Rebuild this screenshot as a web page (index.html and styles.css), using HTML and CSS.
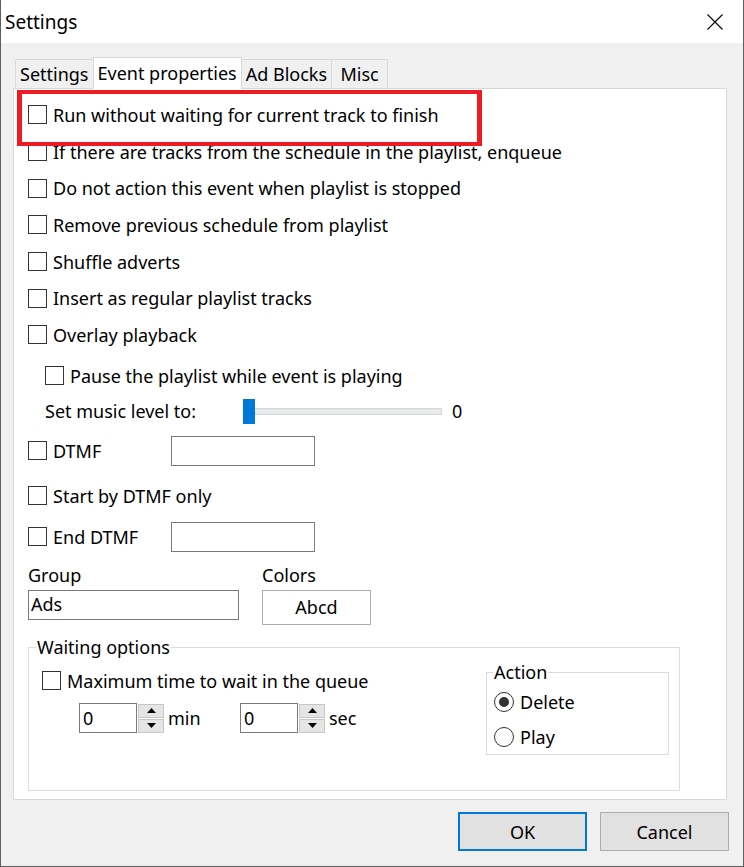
FILE: index.html
```html
<!DOCTYPE html>
<html lang="en">
<head>
    <meta charset="UTF-8">
    <meta name="viewport" content="width=device-width, initial-scale=1.0">
    <title>Settings</title>
    <link rel="stylesheet" href="styles.css">
</head>
<body>
<div class="window">
    <div class="titlebar">
        <span class="title">Settings</span>
        <span class="close">
            <svg width="16" height="16" viewBox="0 0 16 16"><path d="M0.5 0.5L15.5 15.5M15.5 0.5L0.5 15.5" stroke="#000" stroke-width="1.1" fill="none"/></svg>
        </span>
    </div>

    <div class="client">
        <div class="tabs">
            <div class="tab">Settings</div>
            <div class="tab active">Event properties</div>
            <div class="tab">Ad Blocks</div>
            <div class="tab">Misc</div>
        </div>

        <div class="panel">
            <!-- event options -->
            <div class="row marked"><span class="box"></span>Run without waiting for current track to finish</div>
            <div class="row"><span class="box"></span>If there are tracks from the schedule in the playlist, enqueue</div>
            <div class="row"><span class="box"></span>Do not action this event when playlist is stopped</div>
            <div class="row"><span class="box"></span>Remove previous schedule from playlist</div>
            <div class="row"><span class="box"></span>Shuffle adverts</div>
            <div class="row"><span class="box"></span>Insert as regular playlist tracks</div>
            <div class="row"><span class="box"></span>Overlay playback</div>

            <div class="row indent pause"><span class="box"></span>Pause the playlist while event is playing</div>
            <div class="row indent music">
                <span class="music-label">Set music level to:</span>
                <span class="slider"><span class="thumb"></span></span>
                <span class="level">0</span>
            </div>

            <!-- DTMF -->
            <div class="row field dtmf">
                <span class="check-wide"><span class="box"></span>DTMF</span>
                <span class="text"></span>
            </div>
            <div class="row field start"><span class="box"></span>Start by DTMF only</div>
            <div class="row field end">
                <span class="check-wide"><span class="box"></span>End DTMF</span>
                <span class="text"></span>
            </div>

            <div class="fields">
                <div class="group-col">
                    <div class="label">Group</div>
                    <div class="text wide">Ads</div>
                </div>
                <div class="colors-col">
                    <div class="label">Colors</div>
                    <div class="color-btn">Abcd</div>
                </div>
            </div>

            <!-- waiting options -->
            <fieldset class="waiting">
                <legend>Waiting options</legend>
                <div class="wait-body">
                    <div class="wait-left">
                        <div class="row max"><span class="box"></span>Maximum time to wait in the queue</div>
                        <div class="spins">
                            <div class="spin">
                                <span class="num">0</span>
                                <span class="arrows">
                                    <span><svg width="9" height="5" viewBox="0 0 9 5"><path d="M0 5L4.5 0L9 5Z" fill="#000"/></svg></span>
                                    <span><svg width="9" height="5" viewBox="0 0 9 5"><path d="M0 0L4.5 5L9 0Z" fill="#000"/></svg></span>
                                </span>
                                <span class="unit">min</span>
                            </div>
                            <div class="spin">
                                <span class="num">0</span>
                                <span class="arrows">
                                    <span><svg width="9" height="5" viewBox="0 0 9 5"><path d="M0 5L4.5 0L9 5Z" fill="#000"/></svg></span>
                                    <span><svg width="9" height="5" viewBox="0 0 9 5"><path d="M0 0L4.5 5L9 0Z" fill="#000"/></svg></span>
                                </span>
                                <span class="unit">sec</span>
                            </div>
                        </div>
                    </div>
                    <fieldset class="action">
                        <legend>Action</legend>
                        <div class="radio-row first"><span class="radio on"></span>Delete</div>
                        <div class="radio-row"><span class="radio"></span>Play</div>
                    </fieldset>
                </div>
            </fieldset>
        </div>

        <div class="footer">
            <button class="btn default">OK</button>
            <button class="btn">Cancel</button>
        </div>
    </div>
</div>
</body>
</html>
```

FILE: styles.css
```css
* {
    box-sizing: border-box;
}
body {
    margin: 0;
    font-family: "Noto Sans", "Open Sans", sans-serif;
    font-size: 18px;
    color: #000;
}
.window {
    width: 744px;
    height: 867px;
    border: 1px solid #5f5f5f;
    border-top: 0;
    background: #f0f0f0;
    display: flex;
    flex-direction: column;
}
.titlebar {
    height: 43px;
    flex: none;
    background: #fff;
    display: flex;
    align-items: center;
    justify-content: space-between;
    padding-left: 4px;
}
.title {
    font-size: 19px;
}
.close {
    width: 56px;
    display: flex;
    justify-content: center;
}
.client {
    flex: 1;
    padding: 14px 14px 0 12px;
    display: flex;
    flex-direction: column;
}
/* tabs */
.tabs {
    height: 31px;
    display: flex;
    align-items: flex-end;
    padding-left: 3px;
    position: relative;
    z-index: 1;
}
.tab {
    height: 29px;
    min-width: 57px;
    padding: 0 4px;
    margin-left: -1px;
    border: 1px solid #d9d9d9;
    border-bottom: 0;
    background: #f0f0f0;
    display: flex;
    align-items: center;
    justify-content: center;
}
.tab.active {
    height: 32px;
    margin-bottom: -1px;
    padding-bottom: 2px;
    background: #fff;
}
.panel {
    width: 714px;
    height: 712px;
    flex: none;
    background: #fff;
    border: 1px solid #d9d9d9;
    padding: 7.67px 0 0 14px;
}
/* rows */
.row {
    height: 36.67px;
    display: flex;
    align-items: center;
    gap: 6px;
    white-space: nowrap;
}
.box {
    width: 19px;
    height: 19px;
    flex: none;
    border: 1px solid #333;
    background: #fff;
}
.marked {
    position: relative;
}
.marked::after {
    content: "";
    position: absolute;
    left: -11px;
    top: -6.67px;
    width: 455px;
    height: 48px;
    border-style: solid;
    border-color: #ed1c24;
    border-width: 4px 5px;
}
.indent {
    padding-left: 17px;
}
.pause {
    height: 45.33px;
}
.music {
    height: 25px;
    gap: 0;
}
.music-label {
    width: 198px;
}
.slider {
    position: relative;
    width: 199px;
    height: 7px;
    background: #e7eaea;
    border: 1px solid #d6d6d6;
}
.thumb {
    position: absolute;
    left: -1px;
    top: -10px;
    width: 12px;
    height: 25px;
    background: #0078d7;
}
.level {
    margin-left: 10px;
}
.field {
    height: 30px;
}
.dtmf {
    margin-top: 12.33px;
}
.start {
    margin-top: 15px;
}
.end {
    margin-top: 11px;
}
.check-wide {
    width: 137px;
    flex: none;
    display: flex;
    align-items: center;
    gap: 6px;
}
.text {
    width: 144px;
    height: 30px;
    border: 1px solid #7a7a7a;
    background: #fff;
}
/* group and colors */
.fields {
    display: flex;
    gap: 23px;
    margin-top: 11px;
}
.label {
    height: 24px;
    line-height: 24px;
    margin-bottom: 3px;
}
.text.wide {
    width: 211px;
    padding-left: 2px;
    line-height: 27px;
}
.color-btn {
    width: 109px;
    height: 35px;
    border: 1px solid #adadad;
    background: #fff;
    display: flex;
    align-items: center;
    justify-content: center;
}
/* group boxes */
fieldset {
    margin: 0;
    border: 1px solid #dcdcdc;
    min-inline-size: 0;
}
legend {
    padding: 0 1px;
    line-height: 23px;
}
.waiting {
    width: 652px;
    margin-top: 11px;
    padding: 0 10px 35px 13px;
}
.waiting > legend {
    margin-left: -6px;
}
.wait-body {
    display: flex;
}
.max {
    height: 24px;
    margin-top: 10px;
}
.spins {
    display: flex;
    margin-top: 10.5px;
    padding-left: 37px;
}
.spin {
    width: 161px;
    display: flex;
    align-items: center;
}
.num {
    width: 58px;
    height: 30px;
    border: 1px solid #7a7a7a;
    padding-left: 3px;
    display: flex;
    align-items: center;
}
.arrows {
    display: flex;
    flex-direction: column;
    gap: 1px;
    margin-left: 1px;
}
.arrows span {
    width: 26px;
    height: 14px;
    background: #e5e5e5;
    border: 1px solid #c6c6c6;
    display: flex;
    align-items: center;
    justify-content: center;
}
.unit {
    margin-left: 4px;
}
.action {
    width: 183px;
    margin: 2px 0 0 auto;
    padding: 0 6px 2px 7px;
    align-self: flex-start;
}
.action > legend {
    margin-left: -1px;
}
.radio-row {
    height: 30px;
    display: flex;
    align-items: center;
    gap: 6px;
}
.radio-row.first {
    margin-top: 3.5px;
    margin-bottom: 5px;
}
.radio {
    width: 20px;
    height: 20px;
    border: 1px solid #333;
    border-radius: 50%;
    background: #fff;
    display: flex;
    align-items: center;
    justify-content: center;
}
.radio.on::after {
    content: "";
    width: 10px;
    height: 10px;
    border-radius: 50%;
    background: #333;
}
/* buttons */
.footer {
    display: flex;
    justify-content: flex-end;
    gap: 13px;
    padding-top: 12px;
}
.btn {
    width: 129px;
    height: 39px;
    font: inherit;
    color: #000;
    background: #e1e1e1;
    border: 1px solid #adadad;
}
.btn.default {
    border: 2px solid #0078d7;
}
```
